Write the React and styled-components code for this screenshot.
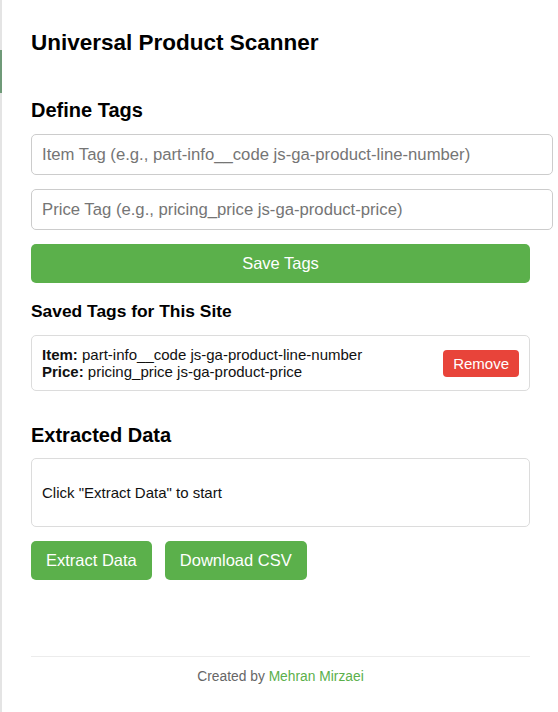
import React from "react";
import styled, { createGlobalStyle } from "styled-components";

const Global = createGlobalStyle`
  html, body { margin: 0; padding: 0; background: #fff; }
  body { font-family: "Liberation Sans", Arial, sans-serif; color: #111; }
  * { box-sizing: border-box; }
`;

const Page = styled.div`
  display: flex;
  min-height: 712px;
  background: #fff;
`;

const EdgeStrip = styled.div`
  width: 2px;
  flex: none;
  background: #e4e4e4;
  display: flex;
  flex-direction: column;
`;

const EdgeMark = styled.div`
  margin-top: 50px;
  height: 43px;
  background: #6f9a78;
`;

const Main = styled.main`
  width: 499px;
  margin-left: 29px;
  padding-top: 30px;
  display: flex;
  flex-direction: column;
`;

const Title = styled.h1`
  margin: 0;
  font-size: 22.5px;
  font-weight: 700;
  line-height: 26px;
  color: #000;
`;

const SectionTitle = styled.h2`
  margin: ${(p) => p.$mt || "43px"} 0 ${(p) => p.$mb || "12px"};
  font-size: 20px;
  font-weight: 700;
  line-height: 23px;
  color: #000;
`;

const SubTitle = styled.h3`
  margin: 18px 0 14px;
  font-size: 17.4px;
  font-weight: 700;
  line-height: 20px;
  color: #000;
`;

const Input = styled.input`
  display: block;
  width: 522px;
  height: 41px;
  margin: 0 0 14px;
  padding: 0 10px;
  font-family: inherit;
  font-size: 16.7px;
  color: #222;
  border: 1px solid #ccc;
  border-radius: 5px;
  background: #fff;
  outline: none;
  &::placeholder { color: #757575; }
`;

const Button = styled.button`
  font-family: inherit;
  line-height: 19px;
  color: #fff;
  background: ${(p) => (p.$danger ? "#e8443a" : "#5bb04b")};
  border: none;
  border-radius: ${(p) => (p.$small ? "4px" : "5px")};
  padding: ${(p) => (p.$small ? "4px 10px" : "10px 15px")};
  font-size: ${(p) => (p.$small ? "15px" : "16.5px")};
  width: ${(p) => (p.$block ? "100%" : "auto")};
  cursor: pointer;
`;

const Card = styled.div`
  border: 1px solid #dcdcdc;
  border-radius: 5px;
  padding: 10px;
  display: flex;
  align-items: center;
  justify-content: space-between;
  font-size: 15px;
  line-height: 17px;
  color: #111;
  min-height: ${(p) => p.$minH || "auto"};
`;

const TagLines = styled.div`
  display: flex;
  flex-direction: column;
`;

const Label = styled.strong`
  font-weight: 700;
`;

const ButtonRow = styled.div`
  display: flex;
  gap: 13px;
  margin-top: 14px;
`;

const Footer = styled.footer`
  margin-top: 76px;
  border-top: 1px solid #ececec;
  padding-top: 12px;
  text-align: center;
  font-size: 13.8px;
  line-height: 16px;
  color: #666;
`;

const Author = styled.span`
  color: #5bb04b;
`;

export default function App() {
  return (
    <Page>
      <Global />
      <EdgeStrip>
        <EdgeMark />
      </EdgeStrip>
      <Main>
        <Title>Universal Product Scanner</Title>

        <SectionTitle>Define Tags</SectionTitle>
        <Input placeholder="Item Tag (e.g., part-info__code js-ga-product-line-number)" />
        <Input placeholder="Price Tag (e.g., pricing_price js-ga-product-price)" />
        <Button $block>Save Tags</Button>

        <SubTitle>Saved Tags for This Site</SubTitle>
        <Card>
          <TagLines>
            <span>
              <Label>Item:</Label> part-info__code js-ga-product-line-number
            </span>
            <span>
              <Label>Price:</Label> pricing_price js-ga-product-price
            </span>
          </TagLines>
          <Button $danger $small>Remove</Button>
        </Card>

        <SectionTitle $mt="33px" $mb="11px">Extracted Data</SectionTitle>
        <Card $minH="69px">Click "Extract Data" to start</Card>
        <ButtonRow>
          <Button>Extract Data</Button>
          <Button>Download CSV</Button>
        </ButtonRow>

        <Footer>
          Created by <Author>Mehran Mirzaei</Author>
        </Footer>
      </Main>
    </Page>
  );
}
